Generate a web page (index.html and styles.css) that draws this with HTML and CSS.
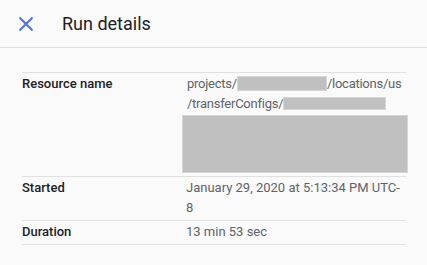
FILE: index.html
```html
<!DOCTYPE html>
<html>
<head>
<meta charset="utf-8">
<link rel="stylesheet" href="styles.css">
</head>
<body>
<div class="panel">
  <header class="header">
    <button class="close" aria-label="Close">
      <svg width="24" height="24" viewBox="0 0 24 24"><path d="M5.5 5.5 L18.5 18.5 M18.5 5.5 L5.5 18.5" stroke="#5470d8" stroke-width="2" fill="none"/></svg>
    </button>
    <h1 class="title">Run details</h1>
  </header>
  <main class="content">
    <div class="details">
      <div class="row">
        <div class="label">Resource name</div>
        <div class="value">
          <div class="line">projects/<span class="redact r1"></span>/locations/us</div>
          <div class="line">/transferConfigs/<span class="redact r2"></span></div>
          <div class="redact block"></div>
        </div>
      </div>
      <div class="row">
        <div class="label">Started</div>
        <div class="value">January 29, 2020 at 5:13:34 PM UTC-8</div>
      </div>
      <div class="row">
        <div class="label">Duration</div>
        <div class="value">13 min 53 sec</div>
      </div>
    </div>
  </main>
</div>
</body>
</html>
```
FILE: styles.css
```css
html, body {
  margin: 0;
  padding: 0;
  background: #fafafa;
  font-family: Roboto, "Liberation Sans", sans-serif;
}
.panel {
  width: 427px;
  height: 265px;
  background: #fafafa;
}
.header {
  height: 47px;
  border-bottom: 1px solid #e0e0e0;
  display: flex;
  align-items: center;
}
.close {
  width: 24px;
  height: 24px;
  padding: 0;
  margin: 0 0 0 14px;
  border: none;
  background: none;
  display: flex;
}
.title {
  margin: 0 0 0 24px;
  font-size: 18px;
  font-weight: 400;
  color: #202124;
}
.content {
  padding: 24px 21px 0 22px;
}
.details {
  border-top: 1px solid #e0e0e0;
}
.row {
  display: grid;
  grid-template-columns: 164px 1fr;
  border-bottom: 1px solid #e0e0e0;
  padding: 1px 0 2px;
  font-size: 13px;
  line-height: 20px;
}
.label {
  color: #202124;
  font-weight: 500;
}
.value {
  color: #5f6368;
}
.line {
  white-space: nowrap;
  letter-spacing: -0.25px;
  padding-left: 1px;
}
.redact {
  display: inline-block;
  background: #c0c0c0;
  box-shadow: inset 0 0 0 1px #d6d6d6;
}
.r1 {
  width: 90px;
  height: 15px;
  vertical-align: -3px;
}
.r2 {
  width: 103px;
  height: 13px;
  vertical-align: -2px;
}
.block {
  display: block;
  width: 226px;
  height: 58px;
  margin: 1px 0 1px -4px;
}
```
